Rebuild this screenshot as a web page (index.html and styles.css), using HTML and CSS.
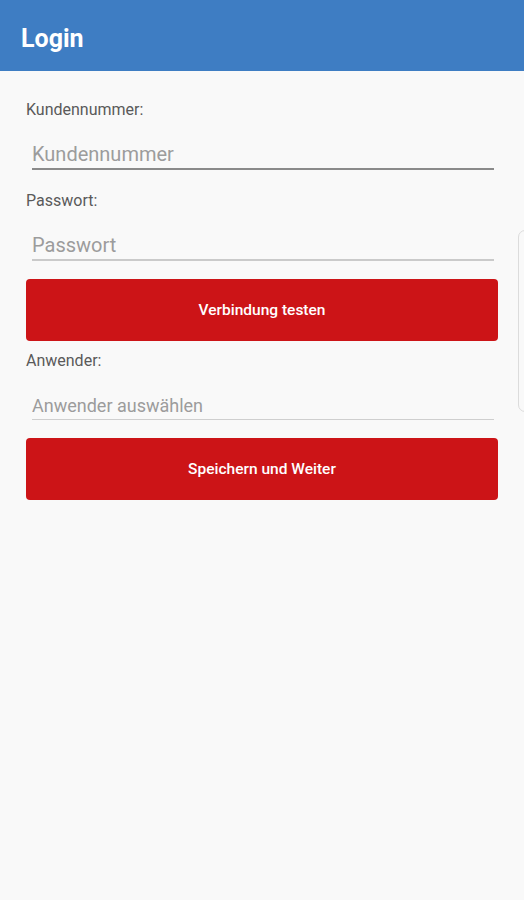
FILE: index.html
```html
<!DOCTYPE html>
<html lang="de">
<head>
    <meta charset="UTF-8">
    <meta name="viewport" content="width=device-width, initial-scale=1.0">
    <title>Login</title>
    <link rel="stylesheet" href="styles.css">
</head>
<body>
    <header class="toolbar">
        <h1>Login</h1>
    </header>

    <main class="form">
        <label class="field-label first" for="kundennummer">Kundennummer:</label>
        <input class="field-input focused" type="text" id="kundennummer" placeholder="Kundennummer">

        <label class="field-label" for="passwort">Passwort:</label>
        <input class="field-input" type="password" id="passwort" placeholder="Passwort">

        <button class="btn" type="button">Verbindung testen</button>

        <label class="field-label small-gap" for="anwender">Anwender:</label>
        <input class="field-input select" type="text" id="anwender" placeholder="Anwender auswählen">

        <button class="btn" type="button">Speichern und Weiter</button>
    </main>

    <!-- Randleiste rechts (teilweise sichtbar) -->
    <div class="edge-panel"></div>
</body>
</html>
```

FILE: styles.css
```css
body {
    margin: 0;
    font-family: Roboto, "Noto Sans", sans-serif;
    background-color: #f9f9f9;
    min-height: 900px;
    overflow: hidden;
}

.toolbar {
    height: 71px;
    box-sizing: border-box;
    padding: 6px 21px 0;
    background-color: #3e7dc3;
    display: flex;
    align-items: center;
}

.toolbar h1 {
    margin: 0;
    color: #ffffff;
    font-size: 25px;
    font-weight: 700;
}

.form {
    padding: 0 26px;
    display: flex;
    flex-direction: column;
}

.field-label {
    display: block;
    margin-top: 21px;
    font-size: 16px;
    line-height: 20px;
    color: #5a5a5a;
}

.field-label.first {
    margin-top: 29px;
}

.field-label.small-gap {
    margin-top: 10px;
}

.field-input {
    margin: 20px 4px 0 6px;
    height: 30px;
    padding: 0;
    box-sizing: border-box;
    border: none;
    border-bottom: 2px solid #cacaca;
    background: transparent;
    font-family: inherit;
    font-size: 20px;
    color: #333;
    outline: none;
}

.field-input::placeholder {
    color: #9c9c9c;
}

.field-input.focused {
    border-bottom-color: #8a8a8a;
}

.field-input.select {
    margin-top: 20px;
    height: 29px;
    font-size: 18px;
    border-bottom: 1px solid #cfcfcf;
}

.btn {
    margin-top: 18px;
    height: 62px;
    border: none;
    border-radius: 4px;
    background-color: #cc1417;
    color: #ffffff;
    font-family: inherit;
    font-size: 15.5px;
    font-weight: 500;
    cursor: pointer;
}

.edge-panel {
    position: absolute;
    top: 230px;
    right: -12px;
    width: 16px;
    height: 180px;
    border: 1px solid #dcdcdc;
    border-radius: 7px;
}
```
